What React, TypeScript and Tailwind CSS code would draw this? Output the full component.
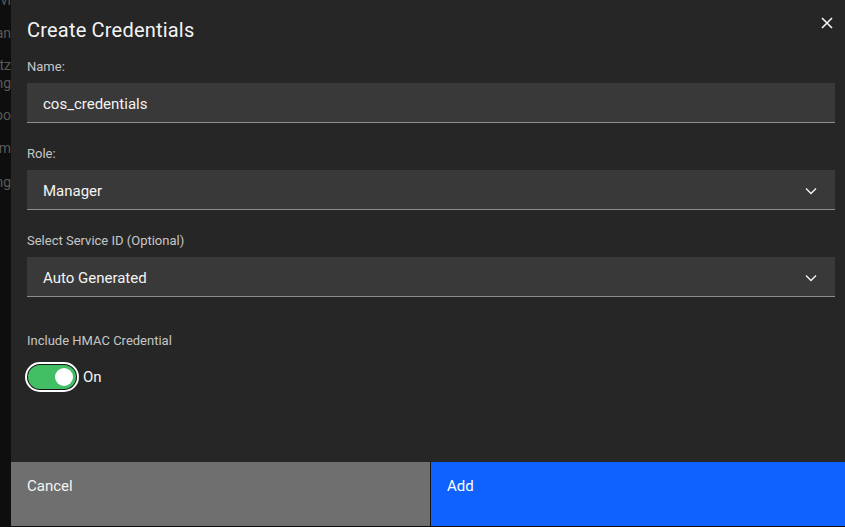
import React from "react";

function Chevron() {
  return (
    <svg width="12" height="8" viewBox="0 0 12 8" fill="none" className="shrink-0">
      <path d="M1 1.5 L6 6.5 L11 1.5" stroke="#f4f4f4" strokeWidth="1.4" />
    </svg>
  );
}

function Field({ label, children }: { label: string; children: React.ReactNode }) {
  return (
    <div className="flex flex-col">
      <div className="text-[13px] leading-4 text-[#c6c6c6]">{label}</div>
      <div className="mt-2">{children}</div>
    </div>
  );
}

export default function App() {
  const fragments = [
    { t: "vi", mt: "mt-[-8px]" },
    { t: "an", mt: "mt-[17px]" },
    { t: "itz", mt: "mt-[16px]" },
    { t: "ng", mt: "mt-[2px]" },
    { t: "oo", mt: "mt-[16px]" },
    { t: "um", mt: "mt-[17px]" },
    { t: "ng", mt: "mt-[18px]" },
  ];
  return (
    <div
      className="w-[845px] h-[527px] bg-[#0e0e0e] flex overflow-hidden"
      style={{ fontFamily: "Roboto, 'Noto Sans', sans-serif" }}
    >
      <div className="w-[11px] shrink-0 overflow-hidden flex flex-col items-end text-[14px] leading-4 text-[#5a5a5a]">
        {fragments.map((f, i) => (
          <div key={i} className={`${f.mt} whitespace-nowrap`}>{f.t}</div>
        ))}
      </div>
      <div className="flex-1 h-[526px] bg-[#262626] flex flex-col relative">
        <button className="absolute right-[11px] top-[16px] w-[14px] h-[14px] flex items-center justify-center">
          <svg width="12" height="12" viewBox="0 0 12 12">
            <path d="M1 1 L11 11 M11 1 L1 11" stroke="#f4f4f4" strokeWidth="1.6" />
          </svg>
        </button>
        <div className="flex-1 pl-4 pr-[10px] pt-[16px]">
          <h2 className="text-[20px] leading-7 text-[#f4f4f4] tracking-[0.2px]">Create Credentials</h2>
          <div className="mt-[15px] flex flex-col gap-[23px]">
            <Field label="Name:">
              <div className="h-10 bg-[#393939] border-b border-[#8d8d8d] flex items-center px-4 pt-[3px] text-[15px] text-[#f4f4f4]">
                cos_credentials
              </div>
            </Field>
            <Field label="Role:">
              <div className="h-10 bg-[#393939] border-b border-[#8d8d8d] flex items-center justify-between pl-4 pr-[18px] pt-[3px] text-[15px] text-[#f4f4f4]">
                <span>Manager</span>
                <Chevron />
              </div>
            </Field>
            <Field label="Select Service ID (Optional)">
              <div className="h-10 bg-[#393939] border-b border-[#8d8d8d] flex items-center justify-between pl-4 pr-[18px] pt-[3px] text-[15px] text-[#f4f4f4]">
                <span>Auto Generated</span>
                <Chevron />
              </div>
            </Field>
          </div>
          <div className="mt-9">
            <div className="text-[13px] leading-4 text-[#c6c6c6]">Include HMAC Credential</div>
            <div className="mt-[16px] flex items-center gap-[7px]">
              <div className="w-[48px] h-[24px] rounded-full bg-[#42be65] relative shadow-[0_0_0_1px_#161616,0_0_0_3px_#ffffff] ml-[1px]">
                <div className="absolute right-[3px] top-[3px] w-[18px] h-[18px] rounded-full bg-white" />
              </div>
              <span className="text-[15px] text-[#f4f4f4]">On</span>
            </div>
          </div>
        </div>
        <div className="h-16 flex gap-[1px] bg-[#161616]">
          <div className="w-[419px] bg-[#6f6f6f] px-4 pt-[13px] text-[15px] text-[#f4f4f4]">Cancel</div>
          <div className="flex-1 bg-[#0f62fe] px-4 pt-[13px] text-[15px] text-white">Add</div>
        </div>
      </div>
    </div>
  );
}
